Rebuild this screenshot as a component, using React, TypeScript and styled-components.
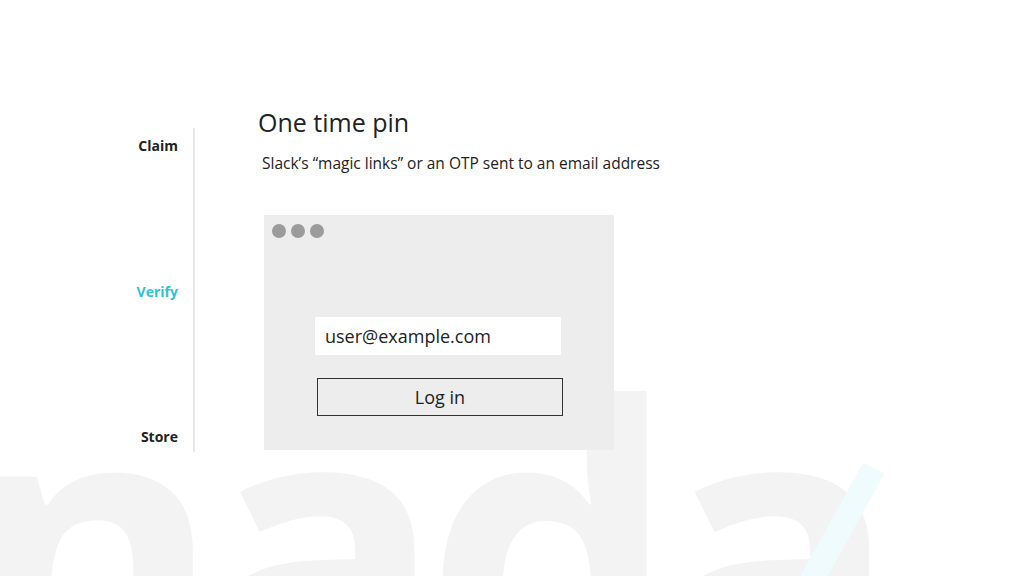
import React from "react";
import styled, { createGlobalStyle } from "styled-components";

const Global = createGlobalStyle`
  html, body { margin: 0; padding: 0; background: #ffffff; }
  body { font-family: "Open Sans", "Noto Sans", sans-serif; color: #222; }
`;

const Page = styled.div`
  position: relative;
  width: 1024px;
  height: 576px;
  overflow: hidden;
  background: #ffffff;
`;

const Watermark = styled.div`
  position: absolute;
  left: -40px;
  top: 340px;
  font-family: "Open Sans", sans-serif;
  font-weight: 700;
  font-size: 400px;
  line-height: 1;
  letter-spacing: -20px;
  color: #f3f3f3;
  white-space: nowrap;
  user-select: none;
  z-index: 0;
`;

const Slash = styled.svg`
  position: absolute;
  left: 780px;
  top: 464px;
  z-index: 0;
`;

const Layout = styled.div`
  position: relative;
  z-index: 1;
  display: flex;
  align-items: flex-start;
  padding-top: 104px;
`;

const Steps = styled.nav`
  margin-top: 24px;
  width: 178px;
  height: 324px;
  padding-right: 15px;
  border-right: 2px solid #e8e8e8;
  display: flex;
  flex-direction: column;
  justify-content: space-between;
  align-items: flex-end;
  box-sizing: content-box;
`;

const Step = styled.div<{ $active?: boolean }>`
  font-weight: 700;
  font-size: 14px;
  line-height: 20px;
  color: ${(p) => (p.$active ? "#2ec4d6" : "#222")};
  padding: 8px 0;
  &:last-child {
    padding: 8px 0 5px;
  }
`;

const Content = styled.main`
  margin-left: 63px;
  display: flex;
  flex-direction: column;
`;

const Title = styled.h1`
  margin: 0;
  font-weight: 400;
  font-size: 25px;
  line-height: 36px;
  color: #222;
`;

const Subtitle = styled.p`
  margin: 13px 0 0 4px;
  font-size: 15.5px;
  line-height: 20px;
  color: #222;
`;

const BrowserWindow = styled.div`
  margin: 42px 0 0 6px;
  width: 350px;
  height: 235px;
  background: #ededed;
  box-sizing: border-box;
  padding: 9px 8px;
  display: flex;
  flex-direction: column;
`;

const Dots = styled.div`
  display: flex;
  gap: 5px;
`;

const Dot = styled.span`
  width: 14px;
  height: 14px;
  border-radius: 50%;
  background: #9b9b9b;
`;

const EmailField = styled.div`
  margin: 79px 0 0 43px;
  width: 246px;
  height: 38px;
  background: #ffffff;
  box-sizing: border-box;
  padding-left: 10px;
  display: flex;
  align-items: center;
  font-size: 18px;
  color: #222;
`;

const LoginButton = styled.div`
  margin: 23px 0 0 45px;
  width: 246px;
  height: 38px;
  box-sizing: border-box;
  border: 1.5px solid #333;
  background: #ededed;
  display: flex;
  align-items: center;
  justify-content: center;
  font-size: 18px;
  color: #222;
`;

export default function App() {
  return (
    <Page>
      <Global />
      <Watermark>nada</Watermark>
      <Slash width="120" height="120" viewBox="0 0 120 120">
        <line x1="94" y1="4" x2="24" y2="130" stroke="#f0fbfd" strokeWidth="24" />
      </Slash>
      <Layout>
        <Steps>
          <Step>Claim</Step>
          <Step $active>Verify</Step>
          <Step>Store</Step>
        </Steps>
        <Content>
          <Title>One time pin</Title>
          <Subtitle>Slack’s “magic links” or an OTP sent to an email address</Subtitle>
          <BrowserWindow>
            <Dots>
              <Dot />
              <Dot />
              <Dot />
            </Dots>
            <EmailField>user@example.com</EmailField>
            <LoginButton>Log in</LoginButton>
          </BrowserWindow>
        </Content>
      </Layout>
    </Page>
  );
}
